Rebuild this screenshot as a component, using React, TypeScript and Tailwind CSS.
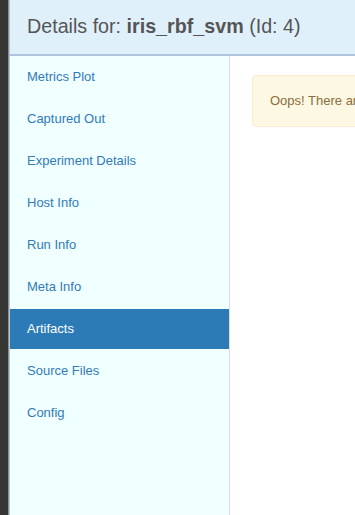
const navItems = [
  'Metrics Plot',
  'Captured Out',
  'Experiment Details',
  'Host Info',
  'Run Info',
  'Meta Info',
  'Artifacts',
  'Source Files',
  'Config',
];

export default function App() {
  const active = 'Artifacts';

  return (
    <div
      className="flex h-[515px] w-[355px] overflow-hidden bg-white"
      style={{ fontFamily: '"Liberation Sans", Arial, sans-serif' }}
    >
      {/* dark edge of the neighbouring panel */}
      <div className="w-2 shrink-0 bg-[#363633]" />
      <div className="w-px shrink-0 bg-[#8e8f8c]" />

      <div className="flex min-w-0 flex-1 flex-col border-l border-[#b0c4de]">
        {/* Header */}
        <div className="flex h-[56px] shrink-0 items-center border-b-2 border-[#b0c4de] bg-[#e0f0fb] pl-[17px]">
          <h2 className="whitespace-nowrap text-[19.7px] text-[#555]">
            Details for: <b className="font-bold">iris_rbf_svm</b> (Id: 4)
          </h2>
        </div>

        <div className="flex min-h-0 flex-1">
          {/* Sidebar */}
          <ul className="flex w-[220px] shrink-0 flex-col gap-[2px] border-r border-[#dddddd] bg-[#f0ffff] pt-px">
            {navItems.map((item) => (
              <li key={item}>
                <a
                  className={
                    item === active
                      ? 'block bg-[#2c7bb6] py-[10px] pl-[17px] text-[13px] leading-5 text-white'
                      : 'block py-[10px] pl-[17px] text-[13px] leading-5 text-[#337ab7]'
                  }
                >
                  {item}
                </a>
              </li>
            ))}
          </ul>

          {/* Content */}
          <div className="min-w-0 flex-1 pl-[22px] pt-[19px]">
            <div className="w-[600px] rounded border border-[#faebcc] bg-[#fcf8e3] px-[17px] py-[15px] text-[13px] leading-5 text-[#8a6d3b]">
              Oops! There are no artifacts for this run.
            </div>
          </div>
        </div>
      </div>
    </div>
  );
}
